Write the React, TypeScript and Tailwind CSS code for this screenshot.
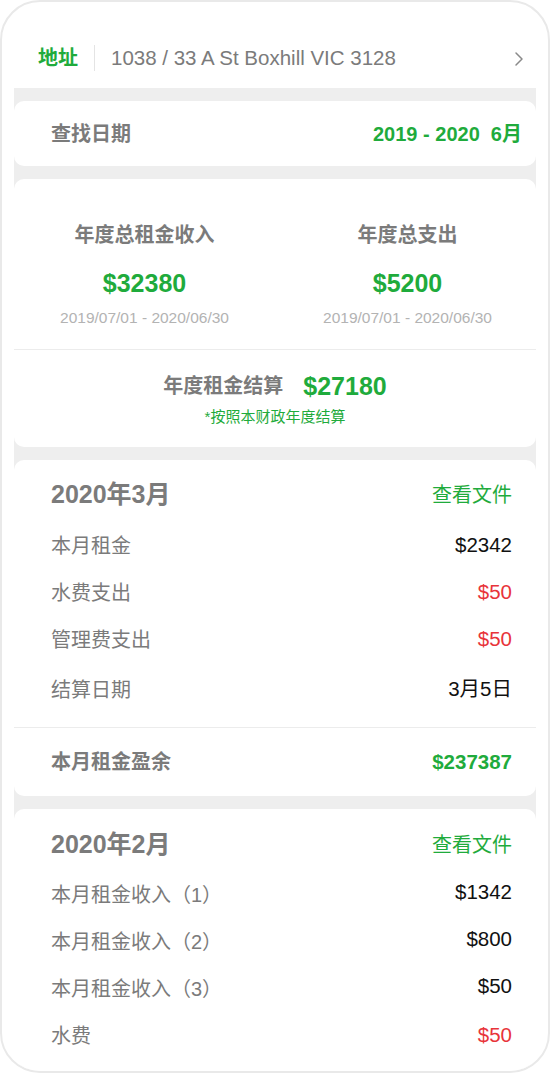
import React from "react";

const GREEN = "text-[#1fab3c]";

function Row({ label, value, color, lift }: { label: string; value: string; color?: string; lift?: boolean }) {
  return (
    <div className="flex h-[47px] items-center justify-between">
      <span className="text-[20px] text-[#7b7b7b]">{label}</span>
      <span className={`text-[20.5px] ${color ?? "text-[#111111]"} ${lift ? "-mt-[5px]" : ""}`}>{value}</span>
    </div>
  );
}

export default function App() {
  return (
    <div className="w-[551px] h-[1074px] bg-white font-['Liberation_Sans','Noto_Sans_CJK_SC',sans-serif]">
      <div className="w-[550px] h-[1073px] rounded-[40px] border-2 border-[#e9e9e9] bg-white overflow-hidden flex flex-col">
        {/* header */}
        <div className="h-[86px] shrink-0 flex items-center pt-[26px] pl-[36px] pr-[24px]">
          <span className={`text-[20px] font-bold ${GREEN}`}>地址</span>
          <span className="mx-[16px] h-[26px] w-px bg-[#e4e4e4]" />
          <span className="flex-1 text-[20.5px] text-[#7b7b7b]">1038 / 33 A St Boxhill VIC 3128</span>
          <svg width="10" height="16" viewBox="0 0 10 16" className="mt-[1px]">
            <path d="M2 2 L8 8 L2 14" fill="none" stroke="#8a8a8a" strokeWidth="1.5" strokeLinecap="round" strokeLinejoin="round" />
          </svg>
        </div>

        {/* gray column */}
        <div className="mx-[12px] flex-1 bg-[#eeeeee] pt-[13px] flex flex-col gap-[13px]">
          {/* search date */}
          <div className="h-[65px] shrink-0 rounded-[10px] bg-white flex items-center justify-between pl-[37px] pr-[14px]">
            <span className="text-[20px] font-bold text-[#7b7b7b]">查找日期</span>
            <span className={`text-[20px] font-bold ${GREEN} whitespace-pre`}>2019 - 2020  6月</span>
          </div>

          {/* annual summary */}
          <div className="shrink-0 rounded-[10px] bg-white">
            <div className="grid grid-cols-2 pt-[44px] pb-[22px] border-b border-[#ececec]">
              <div className="flex flex-col items-center">
                <span className="leading-[24px] text-[20px] font-bold text-[#7b7b7b]">年度总租金收入</span>
                <span className={`mt-[20px] leading-[32px] text-[25px] font-bold ${GREEN}`}>$32380</span>
                <span className="mt-[10px] leading-[18px] text-[15.5px] text-[#b3b3b3]">2019/07/01 - 2020/06/30</span>
              </div>
              <div className="flex flex-col items-center pl-[4px]">
                <span className="leading-[24px] text-[20px] font-bold text-[#7b7b7b]">年度总支出</span>
                <span className={`mt-[20px] leading-[32px] text-[25px] font-bold ${GREEN}`}>$5200</span>
                <span className="mt-[10px] leading-[18px] text-[15.5px] text-[#b3b3b3]">2019/07/01 - 2020/06/30</span>
              </div>
            </div>
            <div className="flex flex-col items-center pt-[20px] pb-[21px]">
              <div className="flex items-center gap-[20px] leading-[32px]">
                <span className="text-[20px] font-bold text-[#7b7b7b]">年度租金结算</span>
                <span className={`text-[25px] font-bold ${GREEN}`}>$27180</span>
              </div>
              <span className={`mt-[6px] leading-[18px] text-[15px] ${GREEN}`}>*按照本财政年度结算</span>
            </div>
          </div>

          {/* March */}
          <div className="shrink-0 rounded-[10px] bg-white">
            <div className="pl-[37px] pr-[24px] pt-[20px] pb-[14px]">
              <div className="flex h-[30px] items-center justify-between mb-[12px]">
                <span className="text-[25px] font-bold text-[#7b7b7b]">2020年3月</span>
                <span className={`text-[20px] ${GREEN}`}>查看文件</span>
              </div>
              <Row label="本月租金" value="$2342" />
              <Row label="水费支出" value="$50" color="text-[#e8343a]" />
              <Row label="管理费支出" value="$50" color="text-[#e8343a]" />
              <div className="flex h-[50px] items-center justify-between pt-[3px]">
                <span className="text-[20px] text-[#7b7b7b]">结算日期</span>
                <span className="text-[20.5px] text-[#111111]">3月5日</span>
              </div>
            </div>
            <div className="h-[69px] border-t border-[#ececec] flex items-center justify-between pl-[37px] pr-[24px]">
              <span className="text-[20px] font-bold text-[#7b7b7b]">本月租金盈余</span>
              <span className={`text-[20.5px] font-bold ${GREEN}`}>$237387</span>
            </div>
          </div>

          {/* February */}
          <div className="flex-1 rounded-t-[10px] bg-white pl-[37px] pr-[24px] pt-[21px]">
            <div className="flex h-[30px] items-center justify-between mb-[11px]">
              <span className="text-[25px] font-bold text-[#7b7b7b]">2020年2月</span>
              <span className={`text-[20px] ${GREEN}`}>查看文件</span>
            </div>
            <Row label="本月租金收入（1）" value="$1342" lift />
            <Row label="本月租金收入（2）" value="$800" lift />
            <Row label="本月租金收入（3）" value="$50" lift />
            <Row label="水费" value="$50" color="text-[#e8343a]" />
          </div>
        </div>
      </div>
    </div>
  );
}
